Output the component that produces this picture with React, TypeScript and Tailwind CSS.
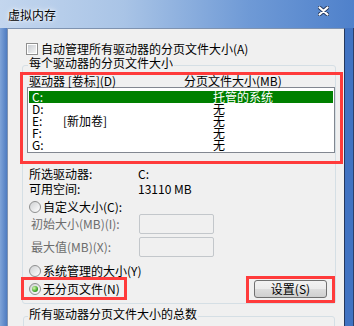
import React from 'react'

const drives = [
  { d: 'C:', label: '', size: '托管的系统', sel: true },
  { d: 'D:', label: '', size: '无', sel: false },
  { d: 'E:', label: '[新加卷]', size: '无', sel: false },
  { d: 'F:', label: '', size: '无', sel: false },
  { d: 'G:', label: '', size: '无', sel: false },
]

function Radio({ checked }: { checked?: boolean }) {
  return (
    <span className="flex h-[12px] w-[12px] shrink-0 items-center justify-center rounded-full border border-[#8e8f8f] bg-[linear-gradient(135deg,#cfd1d3,#ffffff)]">
      {checked && (
        <span className="h-[6px] w-[6px] rounded-full bg-[radial-gradient(circle_at_35%_35%,#d8f7b4,#42a52a_60%,#1f6d12)]" />
      )}
    </span>
  )
}

function Checkbox() {
  return (
    <span className="flex h-[12px] w-[12px] shrink-0 items-center justify-center border border-[#8f8f8f] bg-white">
      <span className="h-[8px] w-[8px] bg-[linear-gradient(135deg,#c9cdd2,#f4f4f4)]" />
    </span>
  )
}

function CloseX() {
  return (
    <svg width="11" height="10" viewBox="0 0 11 10">
      <path d="M1.5 1.5 L9.5 8.5 M9.5 1.5 L1.5 8.5" stroke="#263a5e" strokeWidth="4" strokeLinecap="round" />
      <path d="M1.5 1.5 L9.5 8.5 M9.5 1.5 L1.5 8.5" stroke="#ffffff" strokeWidth="2.2" strokeLinecap="round" />
    </svg>
  )
}

export default function App() {
  return (
    <div className="flex h-[326px] w-[354px] flex-col overflow-hidden bg-[#4a7bc6] font-['Noto_Sans_CJK_SC',sans-serif] text-[12px] leading-[12px] text-black">
      {/* title bar */}
      <div className="flex h-[28px] shrink-0 items-center justify-between bg-[linear-gradient(to_right,#c3d6ee_0%,#a9c4e6_35%,#6f9ad6_70%,#4f81cb_100%)] pl-[8px] pr-[25px]">
        <span className="pt-[2px] [text-shadow:0_0_6px_#ffffff,0_0_3px_#ffffff]">虚拟内存</span>
        <span className="mb-[6px]">
          <CloseX />
        </span>
      </div>

      <div className="flex min-h-0 flex-1">
        <div className="w-[7px] shrink-0 bg-[linear-gradient(to_right,#7ea3d8,#4f7cc1)]" />

        {/* client area */}
        <div className="flex min-w-0 flex-1 flex-col border border-b-0 border-[#7f93b0] border-r-[#24385e] bg-[#f0f0f0]">
          <div className="ml-[18px] mt-[14px] flex h-[12px] items-center gap-[3px]">
            <Checkbox />
            <span>自动管理所有驱动器的分页文件大小(A)</span>
          </div>

          <fieldset className="ml-[14px] mr-[8px] mt-[2px] min-w-0 rounded-[3px] border border-[#d5dfe5] pb-[5px]">
            <legend className="ml-[5px] px-[1px] pb-[4px] leading-[12px]">每个驱动器的分页文件大小</legend>

            <div className="relative mt-[2px]">
              <div className="flex h-[12px] items-center pl-[6px]">
                <span className="w-[155px]">驱动器 [卷标](D)</span>
                <span>分页文件大小(MB)</span>
              </div>
              <div className="ml-[4px] border border-[#828790] bg-white px-[1px] pb-[1px] pt-[3px]">
                {drives.map((r) => (
                  <div
                    key={r.d}
                    className={
                      r.sel
                        ? 'flex h-[12px] items-center bg-[#008000] pl-[3px] text-white'
                        : 'flex h-[12px] items-center pl-[3px]'
                    }
                  >
                    <span className="w-[31px]">{r.d}</span>
                    <span className="w-[150px]">{r.label}</span>
                    <span>{r.size}</span>
                  </div>
                ))}
              </div>
              <span className="pointer-events-none absolute left-[-3px] top-[-3px] h-[92px] w-[323px] border-[3px] border-[#ff3b3b]" />
            </div>

            <div className="mt-[13px] flex h-[15px] items-center pl-[6px]">
              <span className="w-[109px]">所选驱动器:</span>
              <span>C:</span>
            </div>
            <div className="flex h-[15px] items-center pl-[6px]">
              <span className="w-[109px]">可用空间:</span>
              <span>13110 MB</span>
            </div>

            <div className="mt-[5px] flex h-[12px] items-center gap-[2px] pl-[6px]">
              <Radio />
              <span>自定义大小(C):</span>
            </div>
            <div className="mt-[1px] flex h-[20px] items-center pl-[8px] text-[#6d6d6d]">
              <span className="w-[108px]">初始大小(MB)(I):</span>
              <span className="h-[20px] w-[75px] rounded-[2px] border border-[#c3c7cb] bg-[#f0f0f0]" />
            </div>
            <div className="mt-[3px] flex h-[20px] items-center pl-[8px] text-[#6d6d6d]">
              <span className="w-[108px]">最大值(MB)(X):</span>
              <span className="h-[20px] w-[75px] rounded-[2px] border border-[#c3c7cb] bg-[#f0f0f0]" />
            </div>

            <div className="mt-[8px] flex h-[12px] items-center gap-[2px] pl-[6px]">
              <Radio />
              <span>系统管理的大小(Y)</span>
            </div>

            <div className="relative mt-[3px] flex h-[18px] items-center justify-between pl-[6px] pr-[8px]">
              <div className="flex items-center gap-[2px]">
                <Radio checked />
                <span>无分页文件(N)</span>
              </div>
              <button className="flex h-[18px] w-[73px] items-center justify-center rounded-[3px] border border-[#707070] bg-[linear-gradient(to_bottom,#f2f2f2_0%,#ebebeb_50%,#dddddd_51%,#cfcfcf_100%)]">
                设置(S)
              </button>
              <span className="pointer-events-none absolute left-[-2px] top-[-3px] h-[23px] w-[106px] border-[3px] border-[#ff3b3b]" />
              <span className="pointer-events-none absolute left-[223px] top-[-4px] h-[27px] w-[89px] border-[3px] border-[#ff3b3b]" />
            </div>
          </fieldset>

          <fieldset className="ml-[15px] mr-[9px] mt-[4px] h-[60px] min-w-0 shrink-0 rounded-[3px] border border-[#d5dfe5]">
            <legend className="ml-[4px] px-[1px] pb-[4px] leading-[12px]">所有驱动器分页文件大小的总数</legend>
          </fieldset>
        </div>

        <div className="w-[9px] shrink-0 border-r border-[#2a3f6a] bg-[#4173c2]" />
      </div>
    </div>
  )
}
